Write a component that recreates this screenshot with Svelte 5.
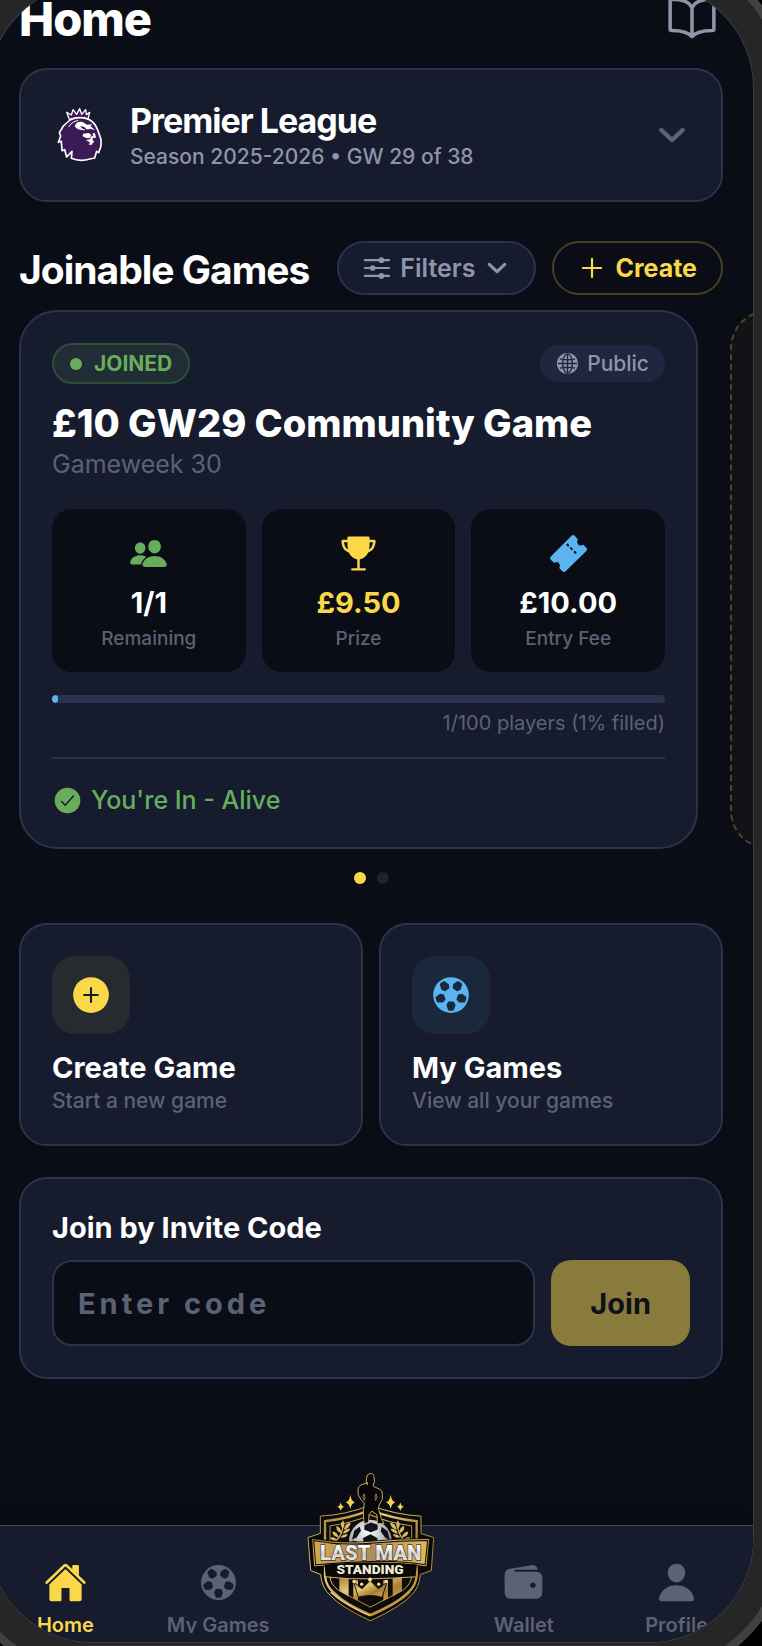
<script>
  const stats = [
    { icon: 'people', value: '1/1', label: 'Remaining', tone: 'green' },
    { icon: 'trophy', value: '£9.50', label: 'Prize', tone: 'yellow' },
    { icon: 'ticket', value: '£10.00', label: 'Entry Fee', tone: 'blue' }
  ];
  const actions = [
    { icon: 'add-circle', title: 'Create Game', text: 'Start a new game', tone: 'yellow' },
    { icon: 'football', title: 'My Games', text: 'View all your games', tone: 'blue' }
  ];
  const tabs = [
    { icon: 'home', label: 'Home', active: true },
    { icon: 'football', label: 'My Games' },
    { logo: true, label: 'Last Man Standing' },
    { icon: 'wallet', label: 'Wallet' },
    { icon: 'person', label: 'Profile' }
  ];
  const filled = 1;
  let code = $state('');

  // Football: a disc with five panels cut out around the centre.
  const panel = [[-52, -30], [-52, 30], [-12, 54], [46, 34], [54, 24], [54, -24], [46, -34], [-12, -54]];
  const football =
    'M256 48a208 208 0 1 0 0 416a208 208 0 1 0 0-416z' +
    [90, 162, 234, 306, 18]
      .map((deg) => {
        const a = (deg * Math.PI) / 180;
        const pts = panel.map(([u, v]) => {
          const r = 128 + u;
          return `${Math.round(256 + r * Math.cos(a) - v * Math.sin(a))} ${Math.round(256 + r * Math.sin(a) + v * Math.cos(a))}`;
        });
        return `M${pts.join('L')}z`;
      })
      .join('');
</script>

{#snippet icon(name)}
  <svg class="icon {name}" viewBox="0 0 512 512" aria-hidden="true" fill="currentColor">
    {#if name === 'book'}
      <path d="M256 160c16-63.16 76.43-95.41 208-96a15.94 15.94 0 0116 16v288a16 16 0 01-16 16c-128 0-177.45 25.81-208 64-30.37-38-80-64-208-64-9.88 0-16-8.05-16-17.93V80a15.94 15.94 0 0116-16c131.57.59 192 32.84 208 96zM256 160v288" fill="none" stroke="currentColor" stroke-width="36" stroke-linecap="round" stroke-linejoin="round" />
    {:else if name === 'chevron'}
      <path d="M104 184l152 144 152-144" fill="none" stroke="currentColor" stroke-width="62" stroke-linecap="round" stroke-linejoin="round" />
    {:else if name === 'options'}
      <g fill="none" stroke="currentColor" stroke-width="40" stroke-linecap="round">
        <path d="M368 112h108M36 112h268M368 400h108M36 400h268M208 256h268M36 256h108" />
      </g>
      <circle cx="336" cy="112" r="52" /><circle cx="176" cy="256" r="52" /><circle cx="336" cy="400" r="52" />
    {:else if name === 'add'}
      <path d="M256 90v332M422 256H90" fill="none" stroke="currentColor" stroke-width="40" stroke-linecap="round" />
    {:else if name === 'globe'}
      <circle cx="256" cy="256" r="236" />
      <g class="cut">
        <ellipse cx="256" cy="256" rx="108" ry="214" /><path d="M256 42v428M42 256h428M86 152q170 42 340 0M86 360q170-42 340 0" />
      </g>
    {:else if name === 'people'}
      <path d="M336 256c-20.56 0-40.44-9.18-56-25.84-15.13-16.25-24.37-37.92-26-61-1.74-24.62 5.77-47.26 21.14-63.76S312 80 336 80c23.83 0 45.38 9.06 60.7 25.52 15.47 16.62 23 39.22 21.26 63.63-1.67 23.11-10.9 44.77-26 61C376.44 246.82 356.57 256 336 256zm131.83 176H204.18a27.71 27.71 0 01-22-10.67 30.22 30.22 0 01-5.26-25.79c8.42-33.81 29.28-61.85 60.32-81.08C264.79 297.4 299.86 288 336 288c36.85 0 71 9 98.71 26.05 31.11 19.13 52 47.33 60.38 81.55a30.27 30.27 0 01-5.32 25.78A27.68 27.68 0 01467.83 432zM147 260c-35.19 0-66.13-32.72-68.95-72.93-1.42-20.6 5-39.65 18-53.62 12.86-13.83 31-21.45 51-21.45s38 7.66 50.93 21.57c13.1 14.08 19.5 33.09 18 53.52-2.87 40.2-33.8 72.91-68.98 72.91zm65.66 31.45c-17.59-8.6-40.42-12.9-65.65-12.9-29.46 0-58.07 7.68-80.57 21.62-25.51 15.83-42.67 38.88-49.6 66.71a27.39 27.39 0 004.79 23.36A25.32 25.32 0 0041.72 400h111a8 8 0 007.87-6.57c.11-.63.25-1.26.41-1.88 8.48-34.06 28.35-62.84 57.71-83.82a8 8 0 00-.63-13.39c-1.57-.92-3.37-1.89-5.42-2.89z" />
    {:else if name === 'trophy'}
      <path fill-rule="evenodd" d="M128 32h256a18 18 0 0118 18v26h62a16 16 0 0116 16c0 68-34 134-96 150-22 46-62 82-112 92v114h66a16 16 0 010 32H174a16 16 0 010-32h66V334c-50-10-90-46-112-92C66 226 32 160 32 92a16 16 0 0116-16h62V50a18 18 0 0118-18zM66 108c4 40 20 76 50 94-4-28-6-62-6-94zM446 108h-44c0 32-2 66-6 94 30-18 46-54 50-94z" />
    {:else if name === 'ticket'}
      <path d="M490 182L454 146a12 12 0 00-15-2 46 46 0 01-63-64 12 12 0 00-2-15L338 24a30 30 0 00-42 0L24 296a30 30 0 000 42l36 36a12 12 0 0015 2 46 46 0 0163 63 12 12 0 002 15l36 36a30 30 0 0042 0L490 224a30 30 0 000-42z" />
      <path class="perforation" d="M240 138L384 282" fill="none" stroke-width="26" stroke-linecap="round" stroke-dasharray="18 50" />
    {:else if name === 'check-circle'}
      <circle cx="256" cy="256" r="212" />
      <path class="mark" d="M160 272l58 62 136-152" />
    {:else if name === 'add-circle'}
      <circle cx="256" cy="256" r="208" />
      <path class="mark" d="M256 176v160M336 256H176" />
    {:else if name === 'football'}
      <path fill-rule="evenodd" d={football} />
    {:else if name === 'home'}
      <path d="M261.56 101.28a8 8 0 00-11.06 0L66.4 277.15a8 8 0 00-2.47 5.79L63.9 448a32 32 0 0032 32H192a16 16 0 0016-16V328a8 8 0 018-8h80a8 8 0 018 8v136a16 16 0 0016 16h96.06a32 32 0 0032-32V282.94a8 8 0 00-2.47-5.79z" />
      <path d="M490.91 244.15l-74.8-71.56V64a16 16 0 00-16-16h-48a16 16 0 00-16 16v32l-57.92-55.38C272.77 35.14 264.71 32 256 32c-8.68 0-16.72 3.14-22.14 8.63l-212.7 203.5c-6.22 6-7 15.87-1.34 22.37A16 16 0 0043 267.56L250.5 69.28a8 8 0 0111.06 0l207.52 198.28a16 16 0 0022.59-.44c6.14-6.36 5.63-16.86-.76-22.97z" />
    {:else if name === 'wallet'}
      <path d="M95.5 104h320a87.73 87.73 0 0111.18.71 66 66 0 00-77.51-55.56L86 94.08h-.3a66 66 0 00-41.07 26.13A87.57 87.57 0 0195.5 104zM415.5 128h-320a64.07 64.07 0 00-64 64v192a64.07 64.07 0 0064 64h320a64.07 64.07 0 0064-64V192a64.07 64.07 0 00-64-64zM368 320a32 32 0 1132-32 32 32 0 01-32 32z" />
      <path d="M32 240v-80c0-21.67 12-58 53.65-65.87L160 90v14a12 12 0 000 24v20z" />
    {:else if name === 'person'}
      <path d="M332.64 64.58C313.18 43.57 286 32 256 32c-30.16 0-57.43 11.5-76.8 32.38-19.58 21.11-29.12 49.8-26.88 80.78C156.76 206.28 203.27 256 256 256s99.16-49.71 103.67-110.82c2.27-30.7-7.33-59.33-27.03-80.6zM432 480H80a31 31 0 01-24.2-11.13c-6.5-7.77-9.12-18.38-7.18-29.11C57.06 392.94 83.4 353.61 124.8 326c36.78-24.51 83.37-38 131.2-38s94.42 13.5 131.2 38c41.4 27.6 67.74 66.93 76.18 113.75 1.94 10.73-.68 21.34-7.18 29.11A31 31 0 01432 480z" />
    {/if}
  </svg>
{/snippet}

{#snippet lion()}
  <svg class="lion" viewBox="48 51 141 168" aria-hidden="true">
    <g fill="#3a1b57" stroke="#fff" stroke-linejoin="round">
      <path d="M88 88L80 67l14 8 5-16 11 14 9-17 6 17 12-14 2 15 10-7-5 20q-28-8-56 1z" stroke-width="4" />
      <path d="M90 90Q120 76 150 90Q166 100 174 122L183 148V168L176 188L170 184L164 204L150 207Q120 216 94 205L96 184L80 201L74 179L66 182L64 154L55 157L62 138L58 128L70 108Z" stroke-width="5" />
    </g>
    <path d="M86 111q12-19 29-19" fill="none" stroke="#fff" stroke-width="3" />
    <g fill="#fff">
      <path d="M104 109q5-16 24-13l13 8 15-1-4 6 13 11-15-4q-3 3-10 2-8-11-19-9l4 6 12 5q-22 3-33-11z" />
      <path d="M129 131l17-2 8 6-4 9-10 1-12-6zM158 129l7 1 3 13-8 1z" />
      <path d="M138 151l12-3 5-11 4 2-1 12 5 5-5 3-2 5-10 0 4-7z" />
    </g>
  </svg>
{/snippet}

{#snippet crest()}
  <svg class="crest" viewBox="50 35 390 455" role="img" aria-label="Last Man Standing">
    <defs>
      <linearGradient id="gold" x1="0" y1="0" x2="1" y2="1">
        <stop offset="0" stop-color="#a98038" /><stop offset=".35" stop-color="#e6c878" /><stop offset=".65" stop-color="#a87d33" /><stop offset="1" stop-color="#dbb55f" />
      </linearGradient>
      <linearGradient id="band" x1="0" x2="1">
        <stop offset="0" stop-color="#d3a850" /><stop offset=".5" stop-color="#b08c58" /><stop offset="1" stop-color="#e0b95c" />
      </linearGradient>
      <linearGradient id="steel" x1="0" y1="0" x2="0" y2="1">
        <stop offset=".2" stop-color="#fff" /><stop offset=".55" stop-color="#d3d0cd" /><stop offset=".9" stop-color="#eee" />
      </linearGradient>
      <radialGradient id="ball" cx=".45" cy=".3" r=".7">
        <stop offset="0" stop-color="#fff" /><stop offset="1" stop-color="#777b86" />
      </radialGradient>
    </defs>
    <path d="M93 170Q170 166 243 137Q317 166 395 170V222L433 234 426 333 393 345Q390 385 365 408Q337 440 243 484Q151 440 124 409Q97 384 94 345L64 333 56 234 93 222Z" fill="#090909" stroke="url(#gold)" stroke-width="3" />
    <path d="M107 185Q180 177 243 151Q307 177 382 185V350Q379 381 354 401Q322 433 243 466Q166 433 135 401Q110 381 107 350Z" fill="#0b0b0b" stroke="url(#gold)" stroke-width="7" />
    <path d="M122 199Q190 190 243 166Q297 190 367 199V350Q366 373 340 393L243 443 148 393Q122 373 122 350Z" fill="#0d0c0b" stroke="url(#gold)" stroke-width="3" />
    <path d="M150 354h28v58l-28-20zM192 362h14v62l-14-8zM282 362h14v54l-14 8zM310 354h28v38l-28 20z" fill="url(#gold)" />
    <g fill="#d9b768">
      <path d="M139 242Q158 225 160 194l3 1Q161 229 142 244z" />
      <path d="M160 208q-11-12 1-26q9 14-1 26zM163 211q3-20 21-21q-3 17-21 21zM156 221q-18-6-14-22q14 6 14 22zM160 222q6-16 23-14q-8 15-23 14zM148 234q-18-2-19-18q16 2 19 18zM153 233q10-12 23-8q-8 13-23 8zM142 242q-15 3-19-8q14-4 19 8z" />
      <path d="M347 242Q328 225 326 194l-3 1Q325 229 344 244z" />
      <path d="M326 208q11-12-1-26q-9 14 1 26zM323 211q-3-20-21-21q3 17 21 21zM330 221q18-6 14-22q-14 6-14 22zM326 222q-6-16-23-14q8 15 23 14zM338 234q18-2 19-18q-16 2-19 18zM333 233q-10-12-23-8q8 13 23 8zM344 242q15 3 19-8q-14-4-19 8z" />
    </g>
    <circle cx="243" cy="245" r="66" fill="url(#ball)" stroke="#0a0a0a" stroke-width="4" />
    <g fill="#121317">
      <path d="M225 197l20-8 20 7 0 14-20 8-20-7zM195 213l16-11 4 12-13 20-14 6zM277 202l18 13 7 27-14-7-14-19zM243 224l22 12-6 22h-32l-7-22zM190 243l14 4v22h-18zM285 244l14 4 3 21h-21z" />
    </g>
    <path d="M234 76q-6-9-2-23 1-10 11-11t11 11q4 14-2 23l1 5 18 8q8 4 8 13 4 19-9 34l-3 10 8 28 9 19-20-1-1-26-15-11-9 10-1 20-4 6h-10l-2-34 3-26-9-9q-13-15-10-31 0-10 8-14l20-8z" fill="#070707" stroke="#c9a860" stroke-width="3" stroke-linejoin="round" />
    <path d="M224 103q-7 10 1 20l2-10zM260 103q7 10-1 20l-2-10z" fill="#111621" stroke="#c9a860" stroke-width="2" />
    <path d="M183 106q3 20 14 23q-11 3-14 19q-3-16-14-19q11-3 14-23zM154 128q2 12 12 14q-10 2-12 13q-2-11-12-13q10-2 12-14zM304 106q3 20 14 23q-11 3-14 19q-3-16-14-19q11-3 14-23zM333 128q2 12 12 14q-10 2-12 13q-2-11-12-13q10-2 12-14z" fill="#f7cf52" />
    <path d="M70 240Q156 256 243 248T418 240L410 319Q330 306 243 309T76 319Z" fill="url(#band)" stroke="#100d08" stroke-width="9" />
    <path d="M70 240Q156 256 243 248T418 240L410 319Q330 306 243 309T76 319Z" fill="none" stroke="url(#gold)" stroke-width="3" />
    <text x="244" y="302" text-anchor="middle" font-size="61" fill="url(#steel)" stroke="#43372a" stroke-width="4" paint-order="stroke">LAST MAN</text>
    <path d="M106 315Q170 309 243 309T383 315L378 350Q310 360 243 358T109 350Z" fill="#080808" />
    <path d="M109 352Q170 360 243 358T378 352" fill="none" stroke="#d7b056" stroke-width="3" />
    <text x="242" y="344" text-anchor="middle" font-size="41" fill="#f0ecd8">STANDING</text>
    <path d="M207 413l-14-45 25 20 24-25 25 25 26-20-15 45q-35-10-71 0z" fill="url(#gold)" stroke="#241a0a" stroke-width="3" />
    <g fill="#f6dda0"><circle cx="194" cy="366" r="5" /><circle cx="217" cy="374" r="5" /><circle cx="242" cy="360" r="6" /><circle cx="268" cy="374" r="5" /><circle cx="291" cy="366" r="5" /></g>
    <path d="M124 397q34 34 119 72" fill="none" stroke="#e7c97c" stroke-width="5" />
    <path d="M243 469q85-38 119-72" fill="none" stroke="#c6953d" stroke-width="5" />
  </svg>
{/snippet}

<div class="page">
  <div class="device">
    <div class="screen">
      <main>
        <header>
          <h1>Home</h1>
          <button class="bare" aria-label="Rules">{@render icon('book')}</button>
        </header>

        <button class="league">
          <span class="league-logo">{@render lion()}</span>
          <span class="league-text">
            <span class="league-name">Premier League</span>
            <span class="league-season">Season 2025-2026 • GW 29 of 38</span>
          </span>
          {@render icon('chevron')}
        </button>

        <div class="section-head">
          <h2>Joinable Games</h2>
          <button class="pill">{@render icon('options')}<span>Filters</span>{@render icon('chevron')}</button>
          <button class="pill create">{@render icon('add')}<span>Create</span></button>
        </div>

        <div class="carousel">
          <article class="game">
            <div class="tags">
              <span class="joined"><i></i>JOINED</span>
              <span class="public">{@render icon('globe')}Public</span>
            </div>
            <h3>£10 GW29 Community Game</h3>
            <p class="week">Gameweek 30</p>
            <div class="stats">
              {#each stats as stat}
                <div class="stat {stat.tone}">
                  {@render icon(stat.icon)}
                  <strong>{stat.value}</strong>
                  <span>{stat.label}</span>
                </div>
              {/each}
            </div>
            <div class="track"><div class="fill" style="width: {filled}%"></div></div>
            <p class="players">1/100 players (1% filled)</p>
            <div class="status">{@render icon('check-circle')}You're In - Alive</div>
          </article>
          <article class="game next"></article>
        </div>

        <div class="dots"><i class="on"></i><i></i></div>

        <div class="actions">
          {#each actions as action}
            <button class="action {action.tone}">
              <span class="tile">{@render icon(action.icon)}</span>
              <span class="action-title">{action.title}</span>
              <span class="action-text">{action.text}</span>
            </button>
          {/each}
        </div>

        <form class="invite" onsubmit={(e) => e.preventDefault()}>
          <label for="code">Join by Invite Code</label>
          <div class="invite-row">
            <input id="code" type="text" placeholder="Enter code" bind:value={code} />
            <button type="submit">Join</button>
          </div>
        </form>
      </main>

      <nav>
        {#each tabs as tab}
          <button class="tab" class:active={tab.active} class:center={tab.logo}>
            {#if tab.logo}
              {@render crest()}
            {:else}
              {@render icon(tab.icon)}
              <span>{tab.label}</span>
            {/if}
          </button>
        {/each}
      </nav>
    </div>
  </div>
</div>

<style>
  :global(body) {
    background: #000;
  }
  * {
    box-sizing: border-box;
  }
  .page {
    --bg: #0a0d15;
    --card: #161b2d;
    --line: #2a334d;
    --yellow: #fbd848;
    --green: #68ad5c;
    --blue: #5bb4f0;
    --soft: #8f95a8;
    --dim: #5c6276;
    display: flex;
    height: 100vh;
    min-height: 1500px;
    overflow: hidden;
    background: #000;
    color: #fff;
    font-family: Inter, 'Liberation Sans', sans-serif;
  }
  .device {
    flex: 1;
    display: flex;
    min-width: 0;
    margin: -52px -27px -32px -47px;
    padding: 28px;
    border: 8px solid #414141;
    border-radius: 140px;
    background: #262626;
  }
  .screen {
    flex: 1;
    display: flex;
    flex-direction: column;
    min-width: 0;
    overflow: hidden;
    border-radius: 104px;
    background: var(--bg);
    box-shadow: 0 0 0 1px #3b3c42;
  }
  main {
    flex: 1;
    padding: 0 30px;
  }
  h1, h2, h3, p {
    margin: 0;
  }
  button {
    margin: 0;
    padding: 0;
    border: 0;
    background: none;
    color: inherit;
    font-family: inherit;
    text-align: left;
    cursor: pointer;
  }
  .icon {
    flex: none;
    display: block;
    width: 28px;
    height: 28px;
  }
  header {
    display: flex;
    align-items: center;
    justify-content: space-between;
    height: 68px;
    margin-bottom: 16px;
    padding-right: 6px;
  }
  h1 {
    padding-top: 2px;
    font-size: 47px;
    line-height: 56px;
    font-weight: 800;
    letter-spacing: -1px;
  }
  .bare {
    color: var(--soft);
  }
  .book {
    width: 50px;
    height: 50px;
  }
  .league {
    display: flex;
    align-items: center;
    gap: 24px;
    width: 100%;
    min-height: 134px;
    padding: 24px 31px;
    border: 2px solid var(--line);
    border-radius: 28px;
    background: var(--card);
  }
  .league-logo {
    display: flex;
    justify-content: center;
    width: 54px;
  }
  .lion {
    width: 47px;
    height: 56px;
  }
  .league-text {
    flex: 1;
    display: flex;
    flex-direction: column;
    padding-top: 4px;
  }
  .league-name {
    font-size: 34px;
    line-height: 40px;
    font-weight: 700;
    letter-spacing: -1px;
  }
  .league-season {
    font-size: 21px;
    line-height: 32px;
    font-weight: 500;
    color: var(--soft);
  }
  .league > :global(.chevron) {
    width: 36px;
    height: 36px;
    color: var(--dim);
  }
  .section-head {
    display: flex;
    align-items: center;
    gap: 16px;
    margin: 39px 0 15px;
  }
  h2 {
    flex: 1;
    padding-top: 3px;
    font-size: 39px;
    line-height: 48px;
    font-weight: 700;
    letter-spacing: -1px;
    white-space: nowrap;
  }
  .pill {
    display: flex;
    align-items: center;
    gap: 9px;
    height: 54px;
    padding: 0 24px;
    border: 2px solid var(--line);
    border-radius: 27px;
    background: var(--card);
    color: var(--soft);
    font-size: 25px;
    font-weight: 600;
  }
  .pill :global(.chevron) {
    width: 26px;
    height: 26px;
  }
  .pill.create {
    border-color: #463f20;
    background: none;
    color: var(--yellow);
    font-weight: 700;
  }
  .carousel {
    display: flex;
    gap: 32px;
    margin-right: -30px;
    overflow: hidden;
  }
  .game {
    flex: 0 0 calc(100% - 55px);
    min-width: 0;
    padding: 31px;
    border: 2px solid var(--line);
    border-radius: 38px;
    background: var(--card);
  }
  .next {
    border: 2px dashed #51471f;
    background: #121317;
  }
  .tags {
    display: flex;
    align-items: center;
    justify-content: space-between;
  }
  .joined,
  .public {
    display: flex;
    align-items: center;
    border-radius: 22px;
    font-size: 21px;
    line-height: 37px;
  }
  .joined {
    gap: 12px;
    padding: 0 16px;
    border: 2px solid #2f4d3b;
    background: #202d34;
    color: var(--green);
    font-weight: 700;
  }
  .joined i {
    width: 12px;
    height: 12px;
    border-radius: 50%;
    background: var(--green);
  }
  .public {
    gap: 8px;
    padding: 0 16px;
    background: #1f2640;
    color: var(--soft);
    font-weight: 500;
  }
  .globe {
    width: 23px;
    height: 23px;
  }
  .cut {
    fill: none;
    stroke: #1f2640;
    stroke-width: 30;
  }
  h3 {
    margin-top: 15px;
    font-size: 38px;
    line-height: 48px;
    font-weight: 800;
    white-space: nowrap;
  }
  .week {
    font-size: 25px;
    line-height: 34px;
    color: var(--dim);
  }
  .stats {
    display: grid;
    grid-template-columns: repeat(3, 1fr);
    gap: 16px;
    margin-top: 28px;
  }
  .stat {
    display: flex;
    flex-direction: column;
    align-items: center;
    height: 163px;
    padding-top: 25px;
    border-radius: 20px;
    background: var(--bg);
  }
  .stat .icon {
    width: 39px;
    height: 39px;
  }
  .stat strong {
    margin-top: 12px;
    font-size: 29px;
    line-height: 36px;
    font-weight: 700;
    color: #fff;
  }
  .stat span {
    margin-top: 4px;
    font-size: 19px;
    line-height: 28px;
    font-weight: 500;
    color: var(--dim);
  }
  .green { color: var(--green); }
  .yellow { color: var(--yellow); }
  .blue { color: var(--blue); }
  .stat.yellow strong { color: var(--yellow); }
  .perforation {
    stroke: var(--bg);
  }
  .track {
    height: 8px;
    margin-top: 23px;
    overflow: hidden;
    border-radius: 4px;
    background: var(--line);
  }
  .fill {
    height: 100%;
    border-radius: 4px;
    background: var(--blue);
  }
  .players {
    margin: 6px 0 20px;
    font-size: 20px;
    line-height: 28px;
    text-align: right;
    color: var(--dim);
  }
  .status {
    display: flex;
    align-items: center;
    gap: 8px;
    padding-top: 25px;
    border-top: 2px solid var(--line);
    font-size: 25px;
    line-height: 32px;
    font-weight: 500;
    color: var(--green);
  }
  .status .icon {
    width: 31px;
    height: 31px;
  }
  .mark {
    fill: none;
    stroke: var(--card);
    stroke-width: 24;
    stroke-linecap: round;
    stroke-linejoin: round;
  }
  .dots {
    display: flex;
    justify-content: center;
    gap: 11px;
    margin: 23px 0 39px;
  }
  .dots i {
    width: 12px;
    height: 12px;
    border-radius: 50%;
    background: #1f222c;
  }
  .dots .on {
    background: var(--yellow);
  }
  .actions {
    display: grid;
    grid-template-columns: 1fr 1fr;
    gap: 16px;
  }
  .action {
    display: flex;
    flex-direction: column;
    align-items: flex-start;
    padding: 31px 31px 28px;
    border: 2px solid var(--line);
    border-radius: 28px;
    background: var(--card);
  }
  .tile {
    display: flex;
    align-items: center;
    justify-content: center;
    width: 78px;
    height: 78px;
    margin-bottom: 16px;
    border-radius: 23px;
    background: #272a2f;
  }
  .blue .tile {
    background: #1b273a;
  }
  .tile .icon {
    width: 44px;
    height: 44px;
  }
  .action-title,
  label {
    font-size: 29px;
    line-height: 36px;
    font-weight: 700;
    color: #fff;
  }
  .action-text {
    font-size: 21px;
    line-height: 30px;
    font-weight: 500;
    color: var(--dim);
  }
  .invite {
    margin-top: 31px;
    padding: 31px;
    border: 2px solid var(--line);
    border-radius: 28px;
    background: var(--card);
  }
  label {
    display: block;
  }
  .invite-row {
    display: flex;
    gap: 16px;
    margin-top: 14px;
  }
  input {
    flex: 1;
    min-width: 0;
    height: 86px;
    margin: 0;
    padding: 0 24px;
    border: 2px solid var(--line);
    border-radius: 20px;
    outline: none;
    background: var(--bg);
    color: #fff;
    font-family: inherit;
    font-size: 29px;
    font-weight: 700;
    letter-spacing: 4px;
  }
  input::placeholder {
    color: var(--dim);
    opacity: 1;
  }
  .invite button {
    padding: 0 39px;
    border-radius: 20px;
    background: #897b3b;
    color: #0e1118;
    font-size: 29px;
    font-weight: 700;
  }
  nav {
    display: grid;
    grid-template-columns: repeat(5, 1fr);
    height: 117px;
    border-top: 1px solid #44454f;
    background: var(--card);
    box-shadow: 0 -8px 24px rgba(0, 0, 0, 0.3);
  }
  .tab {
    display: flex;
    flex-direction: column;
    align-items: center;
    padding-top: 35px;
    color: var(--dim);
  }
  .tab.active {
    color: var(--yellow);
  }
  .tab .icon {
    width: 43px;
    height: 43px;
  }
  .tab span {
    height: 20px;
    margin-top: 9px;
    overflow: hidden;
    font-size: 20px;
    line-height: 24px;
    font-weight: 600;
  }
  .tab.center {
    padding: 0;
  }
  .crest {
    flex: none;
    width: 130px;
    height: 152px;
    margin-top: -55px;
    font-family: Roboto, sans-serif;
    font-weight: 900;
  }
</style>
